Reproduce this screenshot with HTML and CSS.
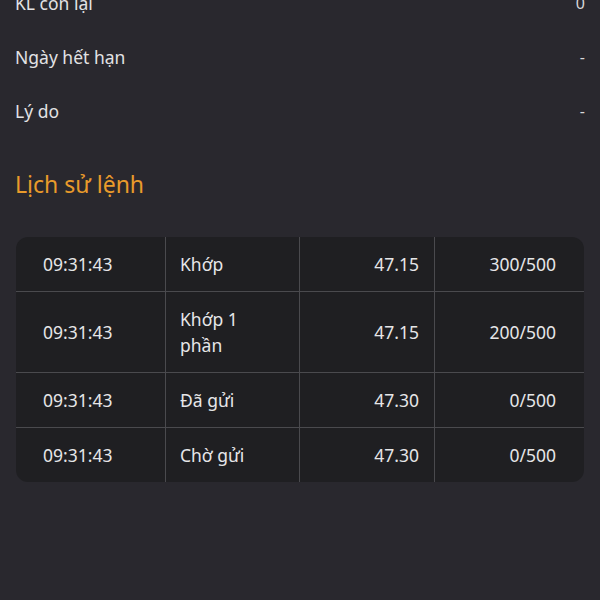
FILE: index.html
```html
<!DOCTYPE html>
<html lang="vi">
<head>
  <meta charset="UTF-8" />
  <title>Chi tiết lệnh</title>
  <link rel="stylesheet" href="styles.css">
</head>
<body>
<div class="page">
  <div class="info-list">
    <div class="info-row"><span class="info-label">KL còn lại</span><span class="info-value">0</span></div>
    <div class="info-row"><span class="info-label">Ngày hết hạn</span><span class="info-value">-</span></div>
    <div class="info-row"><span class="info-label">Lý do</span><span class="info-value">-</span></div>
  </div>

  <h2 class="section-title">Lịch sử lệnh</h2>

  <div class="history-card">
    <table class="history">
      <tbody>
      <tr>
        <td class="col-time">09:31:43</td>
        <td class="col-status">Khớp</td>
        <td class="col-price">47.15</td>
        <td class="col-qty">300/500</td>
      </tr>
      <tr>
        <td class="col-time">09:31:43</td>
        <td class="col-status">Khớp 1<br>phần</td>
        <td class="col-price">47.15</td>
        <td class="col-qty">200/500</td>
      </tr>
      <tr>
        <td class="col-time">09:31:43</td>
        <td class="col-status">Đã gửi</td>
        <td class="col-price">47.30</td>
        <td class="col-qty">0/500</td>
      </tr>
      <tr>
        <td class="col-time">09:31:43</td>
        <td class="col-status">Chờ gửi</td>
        <td class="col-price">47.30</td>
        <td class="col-qty">0/500</td>
      </tr>
      </tbody>
    </table>
  </div>
</div>
</body>
</html>
```

FILE: styles.css
```css
html, body {
    margin: 0;
    height: 100%;
    background-color: #29282e;
}

body {
    font-family: "Noto Sans", "Open Sans", sans-serif;
    color: #e4e4e6;
    overflow: hidden;
}

.page {
    padding: 0 15px;
}

.info-list {
    margin-top: -24px;
}

.info-row {
    display: flex;
    justify-content: space-between;
    align-items: center;
    height: 54px;
    font-size: 17.5px;
}

.info-label {
    color: #e2e2e4;
}

.info-value {
    color: #d8d8da;
    font-size: 16px;
}

.section-title {
    margin: 31px 0 38px;
    font-size: 23px;
    line-height: 30px;
    font-weight: 400;
    color: #e99b2b;
}

.history-card {
    background-color: #1f1f22;
    border-radius: 12px;
    overflow: hidden;
    margin: 0 1px;
}

.history {
    width: 100%;
    border-collapse: collapse;
    table-layout: fixed;
}

.history td {
    padding: 14px 15px;
    font-size: 17.5px;
    line-height: 26px;
    color: #e6e6e8;
    border: 1px solid #4a4a4e;
    vertical-align: middle;
}

.history tr:first-child td {
    border-top: none;
}

.history tr:last-child td {
    border-bottom: none;
}

.history td:first-child {
    border-left: none;
}

.history td:last-child {
    border-right: none;
}

.col-time {
    width: 107px;
    padding-left: 27px !important;
}

.col-status {
    width: 104px;
    padding-left: 14px !important;
}

.col-price {
    width: 104px;
    text-align: right;
}

.col-qty {
    text-align: right;
    padding-right: 28px !important;
}
```
